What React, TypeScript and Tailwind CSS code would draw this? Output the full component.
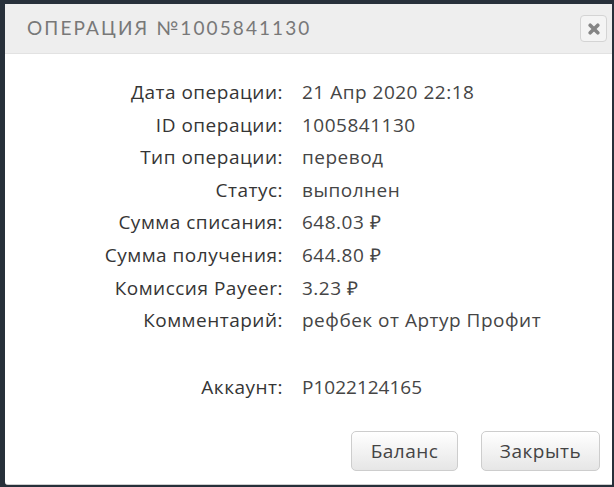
const rows: [string, string][] = [
  ["Дата операции:", "21 Апр 2020 22:18"],
  ["ID операции:", "1005841130"],
  ["Тип операции:", "перевод"],
  ["Статус:", "выполнен"],
  ["Сумма списания:", "648.03 ₽"],
  ["Сумма получения:", "644.80 ₽"],
  ["Комиссия Payeer:", "3.23 ₽"],
  ["Комментарий:", "рефбек от Артур Профит"],
];

const App = () => {
  return (
    <div className="w-[614px] h-[487px] bg-[#27303a] pl-[5px] pt-[4px] overflow-hidden font-['Open_Sans',sans-serif]">
      <div className="w-[607px] h-[481px] bg-white rounded-bl-[3px] flex flex-col border-b border-[#cfcfcf]">
        <div className="h-[50px] bg-[#eeeeee] border-b border-[#e2e2e2] flex items-center justify-between pl-[22px] pr-[5px]">
          <h1 className="text-[19px] tracking-[2.1px] text-[#787878] font-['Lato',sans-serif]">ОПЕРАЦИЯ №1005841130</h1>
          <button className="w-[27px] h-[27px] rounded-[4px] border border-[#d4d4d4] bg-[#f4f4f4] flex items-center justify-center">
            <svg width="12" height="12" viewBox="0 0 12 12">
              <path d="M2.2 2.2 L9.8 9.8 M9.8 2.2 L2.2 9.8" stroke="#858585" strokeWidth="3.6" strokeLinecap="round" />
            </svg>
          </button>
        </div>

        <div className="pt-[22px] grid grid-cols-[278px_1fr] gap-x-[19px] text-[19px] tracking-[0.5px]">
          {rows.map(([label, value]) => (
            <div key={label} className="contents">
              <div className="h-[32.6px] flex items-center justify-end text-[#353535]">{label}</div>
              <div className="h-[32.6px] flex items-center text-[#454545]">{value}</div>
            </div>
          ))}
          <div className="h-[34px]" />
          <div className="h-[34px]" />
          <div className="h-[32.6px] flex items-center justify-end text-[#353535]">Аккаунт:</div>
          <div className="h-[32.6px] flex items-center text-[#454545] tracking-[0px]">P1022124165</div>
        </div>

        <div className="flex justify-end gap-[23px] pr-[12px] mt-[28px]">
          <button className="w-[107px] h-[40px] rounded-[5px] border border-[#cdcdcd] bg-gradient-to-b from-[#ffffff] to-[#e6e6e6] text-[19px] tracking-[0.5px] text-[#444]">
            Баланс
          </button>
          <button className="w-[119px] h-[40px] rounded-[5px] border border-[#cdcdcd] bg-gradient-to-b from-[#ffffff] to-[#e6e6e6] text-[19px] tracking-[0.5px] text-[#444]">
            Закрыть
          </button>
        </div>
      </div>
    </div>
  );
};

export default App;
